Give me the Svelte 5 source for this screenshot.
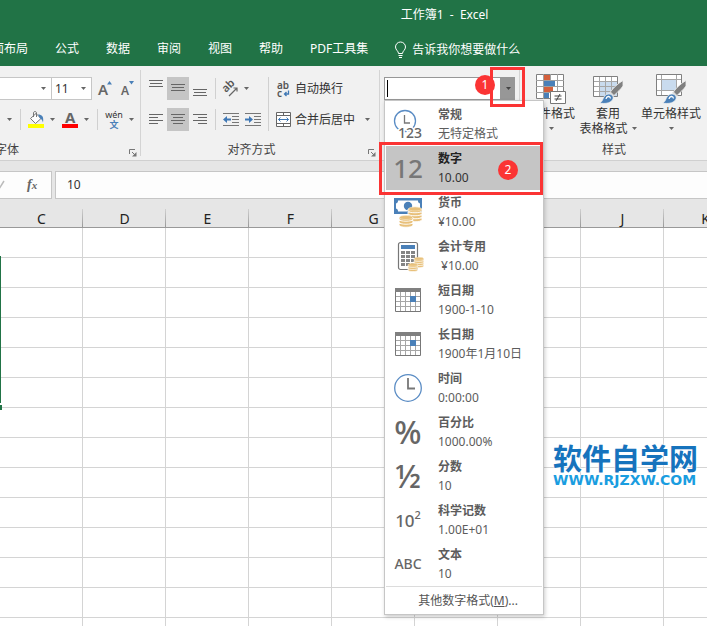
<script>
  const tabs = ['页面布局', '公式', '数据', '审阅', '视图', '帮助', 'PDF工具集'];
  const columns = 'CDEFGHIJKLMNOPQRSTUVWXYZ'.split('');
  const rows = Array.from({ length: 50 }, (_, i) => i + 1);
  const formats = [
    { id: 'general', name: '常规', sample: '无特定格式' },
    { id: 'number', name: '数字', sample: '10.00' },
    { id: 'currency', name: '货币', sample: '¥10.00' },
    { id: 'accounting', name: '会计专用', sample: ' ¥10.00' },
    { id: 'date', name: '短日期', sample: '1900-1-10' },
    { id: 'date', name: '长日期', sample: '1900年1月10日' },
    { id: 'time', name: '时间', sample: '0:00:00' },
    { id: 'percent', name: '百分比', sample: '1000.00%' },
    { id: 'fraction', name: '分数', sample: '10' },
    { id: 'scientific', name: '科学记数', sample: '1.00E+01' },
    { id: 'text', name: '文本', sample: '10' }
  ];
  let selected = $state('数字');
  let formula = $state('10');
  let formatName = $state('');
</script>

{#snippet caret()}
  <svg class="caret" width="5" height="3" viewBox="0 0 5 3" aria-hidden="true"><path d="M0 0h5L2.5 3z" fill="currentColor" /></svg>
{/snippet}

{#snippet lines(kind)}
  <svg width="14" height="17" viewBox="0 0 14 17" aria-hidden="true" stroke="#666" fill="none">
    {#if kind === 'top'}<path d="M0 .5h14M1 3.5h12M0 6.5h14" />
    {:else if kind === 'middle'}<path d="M0 4.5h14M1 7.5h12M0 10.5h14" />
    {:else if kind === 'bottom'}<path d="M0 9.5h14M1 12.5h12M0 15.5h14" />
    {:else if kind === 'left'}<path d="M0 3.5h14M0 6.5h9M0 9.5h14M0 12.5h9" />
    {:else if kind === 'center'}<path d="M0 3.5h14M2 6.5h10M0 9.5h14M2 12.5h10" />
    {:else}<path d="M0 3.5h14M5 6.5h9M0 9.5h14M5 12.5h9" />{/if}
  </svg>
{/snippet}

{#snippet launcher()}
  <button class="launcher" aria-label="更多设置">
    <svg width="8" height="8" viewBox="0 0 8 8" aria-hidden="true"><path d="M.5 5V.5H6M3 3l3 3" fill="none" stroke="#777" /><path d="M7.5 3v4.500H3z" fill="#777" /></svg>
  </button>
{/snippet}

{#snippet coins(x, y, n)}
  <g transform="translate({x} {y})">
    {#each Array.from({ length: n }) as _, i}
      {@const cy = 2.5 + (n - 1 - i) * 3}
      <path d="M0 {cy}v1.500c0 3 14 3 14 0v-1.500z" fill="#e8c07a" stroke="#fff" stroke-width=".9" />
    {/each}
    <ellipse cx="7" cy="2.500" rx="6.500" ry="2" fill="#e8c07a" stroke="#f8e7c6" stroke-width=".6" />
  </g>
{/snippet}

{#snippet brush()}
  <path d="M30 6.500c-5 3-9.500 7-13 12l3.500 3.500c4-4 7.500-7 9.500-10z" fill="#808080" stroke="#f1f1f1" stroke-width=".8" />
  <path d="M17.500 17.500l4 4-1.500 1.500-4-4z" fill="#d9d9d9" />
  <path d="M6.500 29c4-1 3-8 8.500-9 4-.5 6.500 3 4.500 6-2.500 3.500-8 4-13 3z" fill="#4a80b8" stroke="#f1f1f1" stroke-width=".8" />
  <path d="M13 25c.5-3 4-3.500 4.500-.5" fill="none" stroke="#fff" stroke-width="1.300" />
{/snippet}

{#snippet formatIcon(id)}
  {#if id === 'general'}
    <svg width="32" height="32" viewBox="0 0 32 32" aria-hidden="true">
      <circle cx="13" cy="13" r="10.500" fill="none" stroke="#5a8cc4" stroke-width="1.300" />
      <path d="M12.500 7v8H18" fill="none" stroke="#777" stroke-width="1.300" />
      <text x="6" y="30" font-size="14" font-weight="500" fill="#666" stroke="#fff" stroke-width="3" paint-order="stroke">123</text>
    </svg>
  {:else if id === 'number'}<span class="glyph twelve">12</span>
  {:else if id === 'currency'}
    <svg width="28" height="28" viewBox="0 0 28 28" aria-hidden="true">
      <path d="M0 0h28v16H0z" fill="#4a80b8" />
      <path d="M4 2.500h20c0 2 .5 2.500 2 3v5c-1.500.5-2 1-2 3H4c0-2-.5-2.500-2-3v-5c1.500-.5 2-1 2-3z" fill="#fff" />
      <circle cx="14" cy="8" r="4.200" fill="#4a80b8" />
      {@render coins(14, 8.5, 4)}
      {@render coins(5, 17, 3)}
    </svg>
  {:else if id === 'accounting'}
    <svg width="28" height="28" viewBox="0 0 28 28" aria-hidden="true">
      <rect x="4.500" y=".5" width="19" height="27" rx="2" fill="#fff" stroke="#777" stroke-width="1.200" />
      <path d="M7 3h14v4H7z" fill="#4a80b8" />
      {#each [9, 13, 17, 21] as y}
        {#each [7, 12, 17] as x}<rect {x} {y} width="4" height="3" fill="#858585" />{/each}
      {/each}
      <g transform="translate(20 15) scale(.7)">{@render coins(0, 0, 4)}</g>
      <g transform="translate(14 21) scale(.7)">{@render coins(0, 0, 3)}</g>
    </svg>
  {:else if id === 'date'}
    <svg width="26" height="24" viewBox="0 0 26 24" aria-hidden="true">
      <path d="M5.500 4v20M10.500 4v20M15.500 4v20M20.500 4v20M0 8.500h26M0 13.500h26M0 18.500h26" stroke="#a6a6a6" fill="none" />
      <path d="M.5 4v19.500h25V4" stroke="#777" fill="none" />
      <path d="M0 0h26v4H0z" fill="#808080" />
      <path d="M15 8h6v6h-6z" fill="#4a80b8" />
    </svg>
  {:else if id === 'time'}
    <svg width="28" height="28" viewBox="0 0 28 28" aria-hidden="true">
      <circle cx="14" cy="14" r="13.300" fill="none" stroke="#5a8cc4" stroke-width="1.300" />
      <path d="M14 4v10.500h7" fill="none" stroke="#777" stroke-width="1.800" />
    </svg>
  {:else if id === 'percent'}<span class="glyph big">%</span>
  {:else if id === 'fraction'}<span class="glyph big">½</span>
  {:else if id === 'scientific'}<span class="glyph power">10<sup>2</sup></span>
  {:else}<span class="glyph letters">ABC</span>{/if}
{/snippet}

<div class="app">
  <header>
    <div class="title">工作簿1  -  Excel</div>
    <nav>
      {#each tabs as tab}<button>{tab}</button>{/each}
      <button class="tell">
        <svg width="11" height="16" viewBox="0 0 11 16" fill="none" stroke="#fff" aria-hidden="true"><path d="M3.500 11.500c0-2.500-3-3.500-3-6.500a5 5 0 0 1 10 0c0 3-3 4-3 6.500zM3.500 13.500h4M4 15.500h3" /></svg>
        告诉我你想要做什么
      </button>
    </nav>
  </header>

  <div class="ribbon">
    <section class="group font">
      <div class="row">
        <label class="pick name"><select aria-label="字体"><option></option></select>{@render caret()}</label>
        <label class="pick size"><select aria-label="字号"><option>11</option></select>{@render caret()}</label>
        <button class="tool" aria-label="增大字号">
          <svg width="16" height="18" viewBox="0 0 16 18" aria-hidden="true"><text x="0" y="15" font-size="15" font-weight="600" fill="#666">A</text><path d="M9 4.500h5L11.500 1z" fill="#4a80b8" /></svg>
        </button>
        <button class="tool" aria-label="减小字号">
          <svg width="16" height="18" viewBox="0 0 16 18" aria-hidden="true"><text x="1" y="15" font-size="12" font-weight="600" fill="#666">A</text><path d="M9 1h5l-2.500 3.500z" fill="#4a80b8" /></svg>
        </button>
      </div>
      <div class="row second">
        <button class="drop" aria-label="边框">{@render caret()}</button>
        <i class="sep"></i>
        <button class="icon" aria-label="填充颜色">
          <svg width="16" height="17" viewBox="0 0 16 17" aria-hidden="true"><path d="M0 13h16v4H0z" fill="#ff0" /><path d="M2.500 7.500l5.500-5 5 5-5.500 5z" fill="#fff" stroke="#777" /><path d="M5.500 6V2c0-2 3-2 3 0v4" fill="none" stroke="#777" /><path d="M10 3.500c4 0 6 2 5 8-1-3-2-4-3-4z" fill="#4a80b8" /></svg>
        </button>
        <button class="drop" aria-label="填充颜色选项">{@render caret()}</button>
        <button class="icon gap" aria-label="字体颜色">
          <svg width="16" height="17" viewBox="0 0 16 17" aria-hidden="true"><text x="3" y="12" font-size="15" font-weight="700" fill="#666">A</text><path d="M0 13h16v4H0z" fill="#f00" /></svg>
        </button>
        <button class="drop" aria-label="字体颜色选项">{@render caret()}</button>
        <i class="sep"></i>
        <button class="icon phonetic" aria-label="拼音指南">
          <svg width="18" height="18" viewBox="0 0 18 18" aria-hidden="true"><text x="9" y="7" font-size="9" text-anchor="middle" fill="#333">wén</text><text x="9" y="17" font-size="9" font-weight="700" text-anchor="middle" fill="#4a80b8">文</text></svg>
        </button>
        <button class="drop" aria-label="拼音选项">{@render caret()}</button>
      </div>
      <div class="label">字体{@render launcher()}</div>
    </section>

    <section class="group align">
      <div class="blocks">
        <div class="block">
          <div class="row">
            <button class="tool" aria-label="顶端对齐">{@render lines('top')}</button>
            <button class="tool on" aria-label="垂直居中">{@render lines('middle')}</button>
            <button class="tool" aria-label="底端对齐">{@render lines('bottom')}</button>
            <i class="sep"></i>
            <button class="icon" aria-label="方向">
              <svg width="18" height="18" viewBox="0 0 18 18" aria-hidden="true"><text transform="translate(5 13) rotate(-45)" font-size="11" font-weight="600" fill="#555">ab</text><path d="M8 16l8-8M12.500 8H16v3.500" fill="none" stroke="#666" stroke-width="1.200" /></svg>
            </button>
            <button class="drop" aria-label="方向选项">{@render caret()}</button>
          </div>
          <div class="row">
            <button class="tool" aria-label="左对齐">{@render lines('left')}</button>
            <button class="tool on" aria-label="居中">{@render lines('center')}</button>
            <button class="tool" aria-label="右对齐">{@render lines('right')}</button>
            <i class="sep"></i>
            <button class="tool" aria-label="减少缩进">
              <svg width="16" height="13" viewBox="0 0 16 13" aria-hidden="true"><path d="M0 .5h16M9 3.500h7M9 6.500h7M9 9.500h7M0 12.500h16" stroke="#777" fill="none" /><path d="M0 6.500L4 3v2.500h4v2H4V10z" fill="#3f78b5" /></svg>
            </button>
            <button class="tool" aria-label="增加缩进">
              <svg width="16" height="13" viewBox="0 0 16 13" aria-hidden="true"><path d="M0 .5h16M9 3.500h7M9 6.500h7M9 9.500h7M0 12.500h16" stroke="#777" fill="none" /><path d="M8 6.500L4 3v2.500H0v2h4V10z" fill="#3f78b5" /></svg>
            </button>
          </div>
        </div>
        <i class="sep tall"></i>
        <div class="block">
          <div class="row">
            <button class="wide">
              <svg width="16" height="18" viewBox="0 0 16 18" aria-hidden="true"><text x="1" y="9" font-size="10" font-weight="600" fill="#555">ab</text><text x="1" y="17" font-size="10" font-weight="600" fill="#555">c</text><path d="M12.500 10.500v3.500H9M10.500 12l-2 2 2 2" fill="none" stroke="#3f78b5" stroke-width="1.300" /></svg>
              自动换行
            </button>
          </div>
          <div class="row">
            <button class="wide">
              <svg width="16" height="16" viewBox="0 0 16 16" aria-hidden="true"><path d="M.5.5h14v14H.5zM.5 3.500h14M.5 11.500h14M7.500 .5v3M7.500 11.500v3" fill="#fff" stroke="#666" /><path d="M2.500 7.500h10M4.500 5.500l-2 2 2 2M10.500 5.500l2 2-2 2" fill="none" stroke="#3f78b5" /></svg>
              合并后居中
            </button>
            <button class="drop merge" aria-label="合并选项">{@render caret()}</button>
          </div>
        </div>
      </div>
      <div class="label">对齐方式{@render launcher()}</div>
    </section>

    <section class="group num">
      <div class="combo">
        <input aria-label="数字格式" bind:value={formatName} />
        <button class="open" aria-label="展开数字格式">{@render caret()}</button>
        <i class="cursor"></i>
        <div class="menu">
          {#each formats as f}
            <button class="item" class:active={selected === f.name} onclick={() => (selected = f.name)}>
              <span class="pic">{@render formatIcon(f.id)}</span>
              <span class="words"><b>{f.name}</b><span>{f.sample}</span></span>
            </button>
          {/each}
          <button class="more">其他数字格式(<u>M</u>)...</button>
        </div>
        <div class="mark arrow"></div>
        <div class="mark choice"></div>
        <span class="badge one">1</span>
        <span class="badge two">2</span>
      </div>
    </section>

    <section class="group styles">
      <div class="bigs">
        <button class="large cond">
          <svg width="30" height="30" viewBox="0 0 30 30" aria-hidden="true">
            <path d="M.5.5h27v24H.5z" fill="#fff" stroke="#808080" />
            <path d="M7.500 0v25M14.500 0v25M21.500 0v25M0 6.500h28M0 12.500h28M0 18.500h28" stroke="#a0a0a0" fill="none" />
            <path d="M8 1h6v5H8zM8 13h9v5H8z" fill="#d4603c" /><path d="M8 7h11v5H8zM8 19h5v5H8z" fill="#4a80b8" />
            <path d="M14.500 17.500h15v12h-15z" fill="#fff" stroke="#777" /><path d="M18.500 22h7M18.500 25h7M24 20l-4 7" stroke="#444" fill="none" />
          </svg>
          <span>条件格式</span><span class="under">{@render caret()}</span>
        </button>
        <button class="large table">
          <svg width="30" height="30" viewBox="0 0 30 30" aria-hidden="true">
            <path d="M.5 2.500h24v20H.5z" fill="#fff" /><path d="M6 8h19v15H6z" fill="#c9dbee" />
            <path d="M6.500 2v21M12.500 2v21M18.500 2v21M0 7.500h25M0 12.500h25M0 17.500h25" stroke="#a6a6a6" fill="none" />
            <path d="M.5 2.500h24v20H.5z" fill="none" stroke="#808080" />
            {@render brush()}
          </svg>
          <span>套用</span><span class="line">表格格式{@render caret()}</span>
        </button>
        <button class="large cell">
          <svg width="30" height="30" viewBox="0 0 30 30" aria-hidden="true">
            <path d="M.5.5h25v21H.5z" fill="#fff" /><path d="M6 6h14v11H6z" fill="#c9dbee" />
            <path d="M5.500 0v22M20.500 0v22M0 5.500h26M0 16.500h26" stroke="#a6a6a6" fill="none" />
            <path d="M.5.5h25v21H.5z" fill="none" stroke="#808080" />
            {@render brush()}
          </svg>
          <span>单元格样式</span><span class="under">{@render caret()}</span>
        </button>
      </div>
      <div class="label">样式</div>
    </section>
  </div>

  <div class="formula">
    <div class="fx">
      <svg width="8" height="10" viewBox="0 0 8 10" aria-hidden="true"><path d="M0 6l2 3 5-8" fill="none" stroke="#bbb" stroke-width="1.500" /></svg>
      <button aria-label="插入函数"><em>f<small>x</small></em></button>
    </div>
    <input aria-label="编辑栏" bind:value={formula} />
  </div>

  <main>
    <table>
      <thead><tr>{#each columns as c}<th scope="col">{c}</th>{/each}</tr></thead>
      <tbody>
        {#each rows as r (r)}<tr>{#each columns as c}<td></td>{/each}</tr>{/each}
      </tbody>
    </table>
    <i class="selection"></i>
    <i class="handle"></i>
    <div class="brand"><strong>软件自学网</strong><span>WWW.RJZXW.COM</span></div>
  </main>
</div>

<style>
  :global(body) { margin: 0; }
  .app {
    height: 100vh;
    display: flex;
    flex-direction: column;
    overflow: hidden;
    background: #fff;
    color: #333;
    font: 12px/16px "Noto Sans", "Noto Sans CJK SC", sans-serif;
  }
  .app :global(*) { box-sizing: border-box; }
  button, input, select { font: inherit; color: inherit; padding: 0; margin: 0; border: 0; background: none; border-radius: 0; outline: 0; }
  button { display: flex; align-items: center; justify-content: center; white-space: nowrap; }
  svg { display: block; flex: none; overflow: visible; }
  .caret { color: #666; }

  header { flex: none; background: #217346; color: #fff; }
  .title { height: 30px; line-height: 30px; padding-left: 182px; text-align: center; white-space: pre; }
  nav { display: flex; gap: 27px; height: 36px; margin-left: -20px; padding-top: 2px; }
  .tell { gap: 6px; padding-top: 2px; }

  .ribbon { flex: none; display: flex; height: 95px; background: #f1f1f1; border-bottom: 1px solid #d0d0d0; position: relative; z-index: 2; }
  .group { flex: none; display: flex; flex-direction: column; padding-top: 11px; position: relative; }
  .group:not(.styles)::after { content: ""; position: absolute; right: 0; top: 4px; bottom: 4px; width: 1px; background: #d4d4d4; }
  .row { display: flex; align-items: center; height: 23px; }
  .second { margin-top: 8px; padding-left: 3px; }
  .label { margin-top: auto; height: 20px; line-height: 20px; text-align: center; position: relative; color: #444; }
  .launcher { position: absolute; right: 4px; top: 9px; }
  .tool { width: 22px; height: 23px; }
  .on { background: #c5c5c5; }
  .icon { width: 20px; height: 23px; }
  .phonetic { width: 22px; }
  .gap { margin-left: 2px; }
  .drop { width: 12px; height: 23px; }
  .sep { flex: none; width: 1px; height: 21px; margin: 0 5px; background: #d0d0d0; }
  .font { width: 141px; }
  .font .label { text-align: left; text-indent: -5px; }
  .pick { display: grid; align-items: center; height: 23px; border: 1px solid #c6c6c6; background: #fff; }
  .pick > :global(*) { grid-area: 1 / 1; }
  .pick select { appearance: none; width: 100%; height: 21px; padding-left: 3px; }
  .pick .caret { justify-self: end; margin-right: 5px; pointer-events: none; }
  .name { width: 52px; border-left: 0; }
  .size { width: 40px; border-left: 0; margin-right: 3px; }

  .align { width: 239px; padding-left: 4px; }
  .blocks { display: flex; }
  .block { display: flex; flex-direction: column; gap: 8px; }
  .align .sep { margin: 0 4px; }
  .align .tall { height: 54px; }
  .align .block:first-child { width: 119px; }
  .wide { gap: 3px; padding-left: 3px; }
  .merge { margin-left: 6px; }
  .align .label { padding-right: 22px; }

  .num { width: 140px; padding-left: 4px; }
  .combo { position: relative; display: flex; width: 131px; height: 23px; }
  .combo input { flex: 1; min-width: 0; background: #fff; border: 1px solid #979797; padding-left: 3px; }
  .open { width: 14px; background: #979797; }
  .open .caret { color: #444; }
  .cursor { position: absolute; left: 3px; top: 3px; width: 1px; height: 17px; background: #000; }
  .menu { position: absolute; left: 0; top: 100%; width: 160px; padding: 1px 1px 0; background: #fff; border: 1px solid #c6c6c6; box-shadow: 1px 2px 4px #0003; z-index: 3; }
  .item { width: 155px; height: 44px; justify-content: flex-start; text-align: left; color: #5c5c5c; }
  .active { background: #c5c5c5; color: #333; }
  .pic { width: 44px; height: 44px; margin-right: 8px; display: flex; align-items: center; justify-content: center; }
  .words { display: flex; flex-direction: column; line-height: 19px; white-space: pre; }
  .active b { color: #222; }
  .glyph { color: #666; line-height: 1; }
  .twelve { font-size: 26px; font-weight: 500; color: #777; }
  .big { font-size: 32px; font-weight: 500; }
  .power { font-size: 17px; font-weight: 500; }
  .power sup { font-size: 11px; line-height: 0; vertical-align: 8px; }
  .letters { font-size: 14px; font-weight: 500; }
  .more { width: 100%; height: 28px; border-top: 1px solid #dcdcdc; padding-left: 8px; color: #555; }

  .mark { position: absolute; border: 3px solid #fb3434; z-index: 5; pointer-events: none; }
  .arrow { left: 106px; top: -10px; width: 35px; height: 40px; }
  .choice { left: -5px; top: 65px; width: 164px; height: 53px; }
  .badge { position: absolute; z-index: 6; width: 20px; height: 20px; line-height: 20px; border-radius: 50%; background: #fb3434; color: #fff; text-align: center; }
  .one { left: 91px; top: -2px; }
  .two { left: 114px; top: 83px; }

  .styles { width: 188px; padding-top: 8px; }
  .bigs { display: flex; padding-left: 6px; gap: 3px; }
  .large { flex-direction: column; justify-content: flex-start; line-height: 15px; }
  .large > svg { margin-bottom: 2px; }
  .line { display: flex; align-items: center; gap: 4px; }
  .under { display: flex; align-items: center; height: 15px; }
  .cond { width: 50px; }
  .table { width: 58px; }
  .cell { width: 62px; }

  .formula { flex: none; display: flex; gap: 3px; height: 38px; padding-top: 10px; background: #e6e6e6; }
  .fx { display: flex; align-items: center; width: 52px; border: 1px solid #c6c6c6; border-left: 0; background: #fdfdfd; }
  .fx > svg { margin-left: -3px; }
  .fx button { margin-left: 22px; font: 600 14px/16px "Liberation Serif", serif; color: #666; }
  .fx small { font-size: 11px; }
  .formula > input { flex: 1; min-width: 0; border: 1px solid #c6c6c6; border-right: 0; background: #fdfdfd; padding-left: 11px; }

  main { flex: 1; min-height: 0; overflow: hidden; position: relative; }
  table { table-layout: fixed; border-collapse: separate; border-spacing: 0; width: 1992px; }
  th { width: 83px; height: 29px; padding: 12px 0 0; font-weight: 400; font-size: 14px; line-height: 16px; color: #222;
    background: linear-gradient(#d0d0d0, #999) right bottom / 1px 18px no-repeat #e6e6e6; border-bottom: 1px solid #999; }
  td { height: 30px; padding: 0; border-right: 1px solid #d4d4d4; border-bottom: 1px solid #d4d4d4; }
  .selection { position: absolute; left: 0; top: 57px; width: 1px; height: 147px; background: #217346; }
  .handle { position: absolute; left: 0; top: 206px; width: 2px; height: 5px; background: #217346; }
  .brand { position: absolute; left: 553px; top: 242px; display: flex; flex-direction: column; color: #1673bd; text-shadow: 0 0 2px #fff, 0 0 2px #fff; }
  .brand strong { font: 700 29px/32px "Noto Sans CJK SC", sans-serif; }
  .brand span { font: 700 14px/14px "DejaVu Sans", sans-serif; color: #1a9de0; }
</style>
